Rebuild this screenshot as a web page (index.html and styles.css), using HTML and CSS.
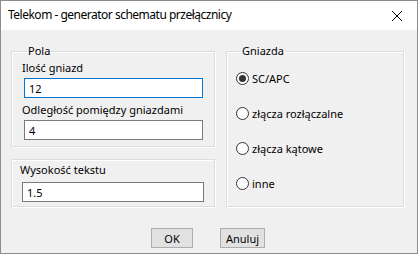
FILE: index.html
```html
<!DOCTYPE html>
<html lang="pl">
<head>
    <meta charset="UTF-8">
    <title>Telekom - generator schematu przełącznicy</title>
    <link rel="stylesheet" href="styles.css">
</head>
<body>
    <div class="window">
        <div class="title-bar">
            <span class="title">Telekom - generator schematu przełącznicy</span>
            <svg class="close" width="12" height="12" viewBox="0 0 12 12">
                <path d="M1 1 L11 11 M11 1 L1 11" stroke="#000" stroke-width="1" fill="none"/>
            </svg>
        </div>

        <div class="dialog">
            <div class="columns">
                <div class="left-col">
                    <fieldset class="group pola">
                        <legend>Pola</legend>
                        <label class="field-label">Ilość gniazd</label>
                        <input class="field focused" type="text" value="12">
                        <label class="field-label">Odległość pomiędzy gniazdami</label>
                        <input class="field" type="text" value="4">
                    </fieldset>

                    <fieldset class="group wysokosc">
                        <label class="field-label">Wysokość tekstu</label>
                        <input class="field" type="text" value="1.5">
                    </fieldset>
                </div>

                <fieldset class="group gniazda">
                    <legend>Gniazda</legend>
                    <label class="radio-row"><input type="radio" name="g" checked><span>SC/APC</span></label>
                    <label class="radio-row"><input type="radio" name="g"><span>złącza rozłączalne</span></label>
                    <label class="radio-row"><input type="radio" name="g"><span>złącza kątowe</span></label>
                    <label class="radio-row"><input type="radio" name="g"><span>inne</span></label>
                </fieldset>
            </div>

            <div class="button-row">
                <button class="btn ok">OK</button>
                <button class="btn cancel">Anuluj</button>
            </div>
        </div>
    </div>
</body>
</html>
```

FILE: styles.css
```css
body {
    margin: 0;
    font-family: 'Noto Sans', 'DejaVu Sans', sans-serif;
    font-size: 11px;
    color: #000;
}

.window {
    width: 418px;
    height: 254px;
    box-sizing: border-box;
    border: 1px solid #8c8c8c;
    background-color: #f0f0f0;
    display: flex;
    flex-direction: column;
}

.title-bar {
    height: 29px;
    background-color: #fff;
    display: flex;
    align-items: center;
    justify-content: space-between;
    padding: 0 14px 0 7px;
    flex-shrink: 0;
}

.title {
    font-size: 12px;
    letter-spacing: -0.5px;
    position: relative;
    top: -1px;
}

.close {
    display: block;
}

.dialog {
    flex: 1;
    padding: 13px 13px 0 10px;
    display: flex;
    flex-direction: column;
}

.columns {
    display: flex;
    gap: 11px;
}

.left-col {
    display: flex;
    flex-direction: column;
    gap: 12px;
    width: 205px;
}

.group {
    margin: 0;
    border: 1px solid #dcdcdc;
    box-shadow: inset 1px 1px 0 #fff, 1px 1px 0 #fff;
    min-width: 0;
}

.group legend {
    padding: 0 1px;
    margin-left: 5px;
    line-height: 16px;
}

.pola {
    height: 104px;
    box-sizing: border-box;
    padding: 0 11px 0 10px;
}

.field-label {
    display: block;
    line-height: 16px;
}

.pola .field-label {
    margin-top: 1px;
    margin-bottom: 2px;
}

.pola .field + .field-label {
    margin-top: 4px;
}

.field {
    display: block;
    box-sizing: border-box;
    width: 179px;
    height: 20px;
    margin-left: 2px;
    border: 1px solid #7a7a7a;
    background: #fff;
    padding: 0 4px;
    font-family: inherit;
    font-size: 11px;
    outline: none;
}

.field.focused {
    border-color: #0078d7;
}

.wysokosc {
    height: 48px;
    box-sizing: border-box;
    padding: 2px 10px 0 8px;
}

.wysokosc .field-label {
    margin-bottom: 4px;
}

.wysokosc .field {
    width: 182px;
}

.gniazda {
    width: 179px;
    height: 164px;
    box-sizing: border-box;
    padding: 11px 8px 0 9px;
}

.radio-row {
    display: flex;
    align-items: center;
    height: 16px;
    margin-bottom: 19px;
}

.radio-row input {
    -webkit-appearance: none;
    appearance: none;
    width: 13px;
    height: 13px;
    margin: 0 3px 0 0;
    border: 1px solid #333;
    border-radius: 50%;
    background: #fff;
    box-sizing: border-box;
    position: relative;
}

.radio-row input:checked::after {
    content: "";
    position: absolute;
    left: 2px;
    top: 2px;
    width: 7px;
    height: 7px;
    border-radius: 50%;
    background: #333;
}

.button-row {
    display: flex;
    gap: 27px;
    padding-left: 140px;
    margin-top: 21px;
}

.btn {
    height: 20px;
    box-sizing: border-box;
    background-color: #e1e1e1;
    border: 1px solid #adadad;
    font-family: inherit;
    font-size: 11px;
    padding: 0;
    color: #000;
}

.ok {
    width: 42px;
}

.cancel {
    width: 45px;
}
```
